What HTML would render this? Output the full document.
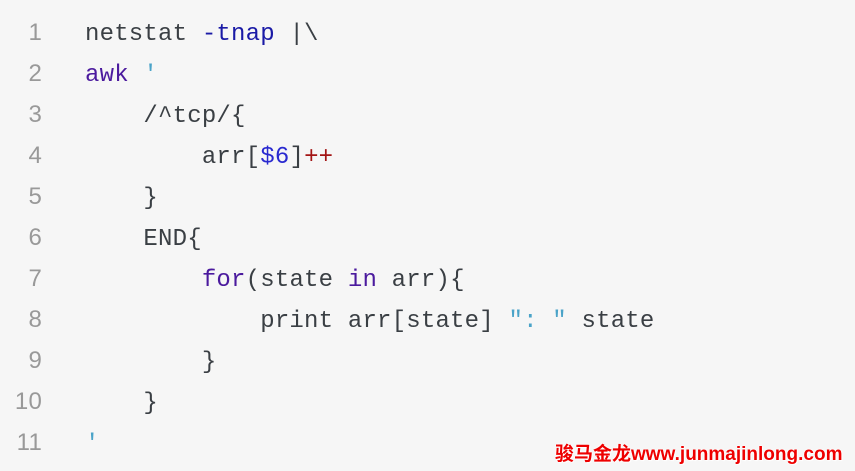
<!DOCTYPE html>
<html><head><meta charset="utf-8"><style>
body{margin:0;width:855px;height:471px;background:#f6f6f6;overflow:hidden;position:relative}
.code{position:absolute;top:12px;left:0;font-family:"Liberation Mono",monospace;font-size:24px;line-height:41px;color:#3a3f44;letter-spacing:0.2px}
.l{white-space:pre;height:41px}
.n{display:inline-block;width:42px;text-align:right;color:#999;margin-right:43px;font-family:"Liberation Sans",sans-serif;font-size:24px}
.k{color:#4b1a9e}.b{color:#1a1aa6}.s{color:#4aa3c8}.r{color:#a31515}.blue{color:#2a2ad0}
.wm{position:absolute;left:555px;top:439px;font-family:"Liberation Sans","Noto Sans CJK SC",sans-serif;font-weight:bold;font-size:19px;color:#e00;text-shadow:0 0 2px #fff,0 0 2px #fff,1px 1px 1px #fff;letter-spacing:0}
</style></head><body>
<div class="code">
<div class="l"><span class="n">1</span>netstat <span class="b">-tnap</span> |\</div>
<div class="l"><span class="n">2</span><span class="k">awk</span> <span class="s">'</span></div>
<div class="l"><span class="n">3</span>    /^tcp/{</div>
<div class="l"><span class="n">4</span>        arr[<span class="blue">$6</span>]<span class="r">++</span></div>
<div class="l"><span class="n">5</span>    }</div>
<div class="l"><span class="n">6</span>    END{</div>
<div class="l"><span class="n">7</span>        <span class="k">for</span>(state <span class="k">in</span> arr){</div>
<div class="l"><span class="n">8</span>            print arr[state] <span class="s">": "</span> state</div>
<div class="l"><span class="n">9</span>        }</div>
<div class="l"><span class="n">10</span>    }</div>
<div class="l"><span class="n">11</span><span class="s">'</span></div>
</div>
<div class="wm">骏马金龙www.junmajinlong.com</div>
</body></html>
